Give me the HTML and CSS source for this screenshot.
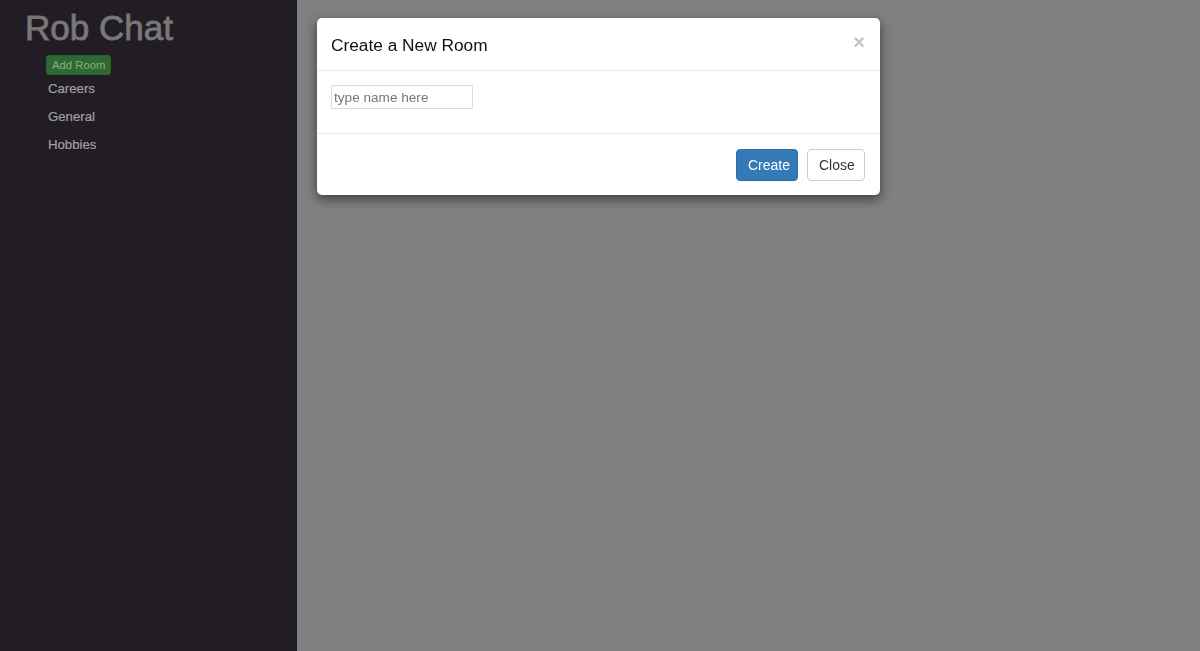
FILE: index.html
```html
<!DOCTYPE html>
<html>
<head>
<meta charset="utf-8">
<title>Rob Chat</title>
<link rel="stylesheet" href="styles.css">
</head>
<body>
<div class="app">
  <aside class="sidebar">
    <h1 class="brand">Rob Chat</h1>
    <div class="rooms">
      <button class="btn-add">Add Room</button>
      <ul class="room-list">
        <li>Careers</li>
        <li>General</li>
        <li>Hobbies</li>
      </ul>
    </div>
  </aside>
  <main class="main"></main>
</div>
<div class="modal-layer">
  <div class="modal">
    <div class="modal-header">
      <h4 class="modal-title">Create a New Room</h4>
      <span class="modal-close">×</span>
    </div>
    <div class="modal-body">
      <input class="room-input" type="text" placeholder="type name here">
    </div>
    <div class="modal-footer">
      <button class="btn btn-primary">Create</button>
      <button class="btn btn-default">Close</button>
    </div>
  </div>
</div>
</body>
</html>
```
FILE: styles.css
```css
* { box-sizing: border-box; }
html, body { margin: 0; padding: 0; height: 100%; }
body {
  font-family: "Liberation Sans", Arial, Helvetica, sans-serif;
  font-size: 14px;
  color: #333;
  overflow: hidden;
}
.app { display: flex; height: 651px; }
.sidebar {
  width: 297px;
  background: #221c24;
  padding: 0 0 0 25px;
}
.brand {
  margin: 8px 0 0 0;
  font-size: 35px;
  line-height: 40px;
  font-weight: normal;
  color: #7a7a7a;
  -webkit-text-stroke: 0.9px #727272;
}
.rooms { padding: 7px 0 0 21px; }
.btn-add {
  display: block;
  height: 20px;
  padding: 0 5px;
  margin: 0;
  background: #2e6a30;
  border: 1px solid #2b6130;
  border-radius: 3px;
  color: #88aa88;
  font-family: "Liberation Sans", Arial, sans-serif;
  font-size: 11.3px;
  line-height: 18px;
}
.room-list {
  list-style: none;
  margin: 0 0 0 2px;
  padding: 0;
}
.room-list li {
  color: #a0a0a0;
  font-size: 13.2px;
  line-height: 28px;
  -webkit-text-stroke: 0.2px #a0a0a0;
}
.main { flex: 1; background: #808080; }
.modal-layer {
  position: fixed;
  top: 0; left: 0; right: 0; bottom: 0;
}
.modal {
  position: absolute;
  top: 18px;
  left: 317px;
  width: 563px;
  background: #fff;
  border-radius: 5px;
  box-shadow: 0 4px 12px rgba(0,0,0,0.55);
}
.modal-header {
  display: flex;
  justify-content: space-between;
  align-items: flex-start;
  padding: 15px 14px 15px 14px;
  border-bottom: 1px solid #e8e8e8;
  height: 53px;
}
.modal-title {
  margin: 2px 0 0 0;
  font-size: 17.3px;
  line-height: 20px;
  font-weight: normal;
  color: #111;
}
.modal-close {
  color: #c4c4c4;
  font-size: 20px;
  font-weight: bold;
  line-height: 18px;
  margin-top: 0;
  margin-right: 1px;
}
.modal-body {
  padding: 14px 14px 24px 14px;
  height: 63px;
  border-bottom: 1px solid #e8e8e8;
}
.room-input {
  display: block;
  width: 142px;
  height: 24px;
  margin: 0;
  padding: 1px 2px;
  border: 1px solid #dcdcdc;
  font-family: "Liberation Sans", Arial, sans-serif;
  font-size: 13.6px;
  color: #333;
  outline: none;
}
.room-input::placeholder { color: #777; }
.modal-footer {
  display: flex;
  justify-content: flex-end;
  gap: 9px;
  padding: 15px 15px 14px 14px;
}
.btn {
  height: 32px;
  padding: 0 11px;
  border-radius: 4px;
  font-family: "Liberation Sans", Arial, sans-serif;
  font-size: 14px;
  line-height: 30px;
  margin: 0;
}
.btn-primary {
  background: #337ab7;
  border: 1px solid #2e6da4;
  color: #fff;
  width: 62px;
}
.btn-default {
  background: #fff;
  border: 1px solid #cfcfcf;
  color: #333;
  width: 58px;
}
```
